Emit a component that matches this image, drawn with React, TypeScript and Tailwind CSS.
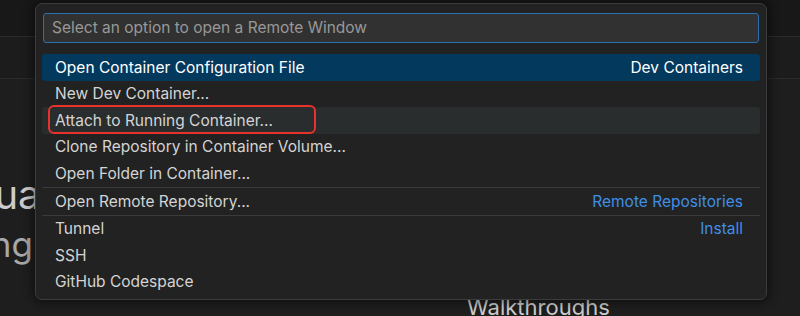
import React from 'react';

type Item = {
  label: string;
  detail?: string;
  separator?: boolean;
  state?: 'active' | 'hover';
};

const items: Item[] = [
  { label: 'Open Container Configuration File', detail: 'Dev Containers', state: 'active' },
  { label: 'New Dev Container...' },
  { label: 'Attach to Running Container...', state: 'hover' },
  { label: 'Clone Repository in Container Volume...' },
  { label: 'Open Folder in Container...' },
  { label: 'Open Remote Repository...', detail: 'Remote Repositories', separator: true },
  { label: 'Tunnel', detail: 'Install', separator: true },
  { label: 'SSH' },
  { label: 'GitHub Codespace' },
];

function Row({ item }: { item: Item }) {
  const bg =
    item.state === 'active'
      ? 'bg-[#04395e] text-white rounded-[3px]'
      : item.state === 'hover'
        ? 'bg-[#2a2d2e] text-[#d4d4d4] rounded-[3px]'
        : 'text-[#d4d4d4]';
  return (
    <div className={item.separator ? 'border-t border-[#3a3a3a]' : ''}>
      <div className={`h-[26.6px] flex items-center justify-between pl-[13px] pr-[17px] ${bg}`}>
        <span>{item.label}</span>
        {item.detail && (
          <span className={item.state === 'active' ? 'text-white' : 'text-[#3f8fe6]'}>{item.detail}</span>
        )}
      </div>
    </div>
  );
}

export default function App() {
  return (
    <div
      className="relative w-[800px] h-[316px] overflow-hidden bg-[#1e1e1e] text-[15.5px]"
      style={{ fontFamily: 'Inter, "Noto Sans", sans-serif' }}
    >
      {/* editor behind the quick pick */}
      <div className="h-[37px] bg-[#181818] border-b border-[#2b2b2b]" />
      <div className="h-[42px] bg-[#1c1c1c] border-b border-[#2b2b2b]" />
      <div className="pt-[96px] text-[#cccccc] leading-none">
        <div className="ml-[-64px] text-[40px] whitespace-nowrap">Visual Studio Code</div>
        <div className="mt-[12px] ml-[-80px] text-[35px] text-[#a8a8a8] whitespace-nowrap">Editing evolved</div>
      </div>
      <div className="absolute left-[467px] top-[296px] text-[22px] text-[#cccccc] leading-none">Walkthroughs</div>

      {/* quick pick */}
      <div className="absolute left-[35px] top-[3px] w-[732px] h-[297px] bg-[#222222] border border-[#3c3c3c] rounded-[7px] shadow-[0_0_10px_3px_rgba(0,0,0,0.45)] px-[6px] pt-[9px]">
        <div className="mx-[1px] h-[30px] bg-[#313131] border border-[#2a6fb0] rounded-[3px] flex items-center px-[8px] text-[#989898]">
          Select an option to open a Remote Window
        </div>
        <div className="mt-[11px]">
          {items.map((it) => (
            <Row key={it.label} item={it} />
          ))}
        </div>
      </div>

      {/* annotation */}
      <div className="absolute left-[48px] top-[105px] w-[268px] h-[29px] border-[2.5px] border-[#e8322b] rounded-[6px]" />
    </div>
  );
}
